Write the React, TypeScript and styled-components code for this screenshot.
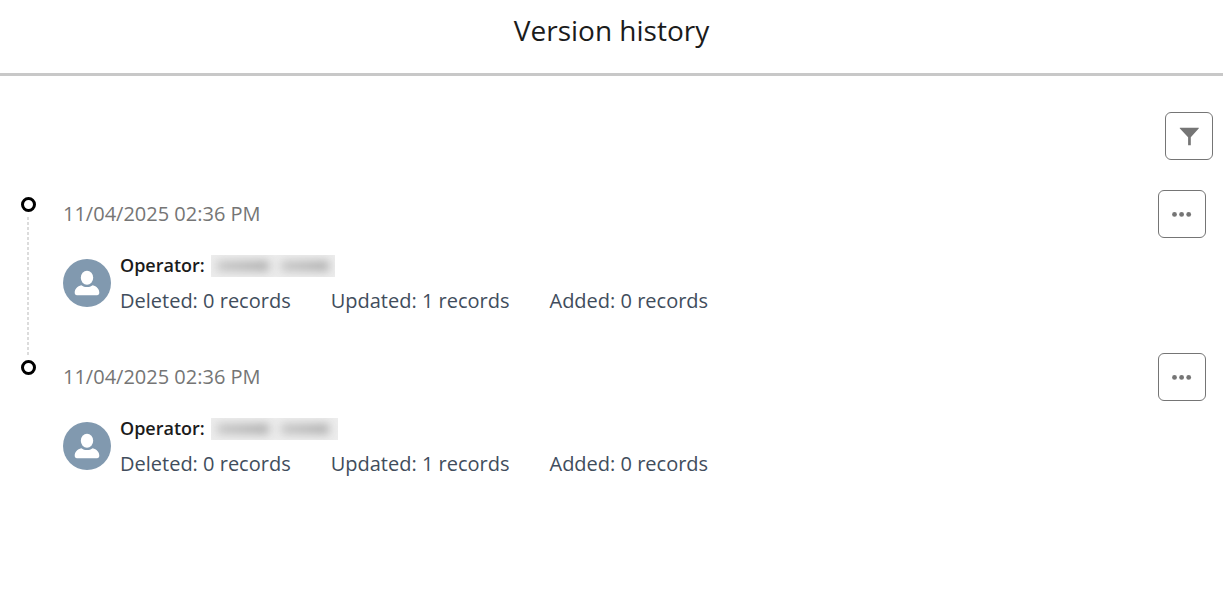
import React from "react";
import styled, { createGlobalStyle } from "styled-components";

const GlobalStyle = createGlobalStyle`
  *, *::before, *::after { box-sizing: border-box; }
  body {
    margin: 0;
    background: #fff;
    color: #1b1b1b;
    font-family: "Segoe UI", "Open Sans", "Noto Sans", sans-serif;
    font-size: 20px;
    line-height: 28px;
  }
`;

const Header = styled.header`
  padding: 10px 16px 23px;
  border-bottom: 3px solid #c8c8c8;
  text-align: center;
`;

const Title = styled.h1`
  margin: 0;
  font-size: 28px;
  font-weight: 400;
  line-height: 40px;
`;

const Toolbar = styled.div`
  display: flex;
  justify-content: flex-end;
  padding: 36px 10px 30px;
`;

const IconButton = styled.button`
  display: flex;
  flex: none;
  align-items: center;
  justify-content: center;
  width: 48px;
  height: 48px;
  padding: 0;
  border: 1px solid #757575;
  border-radius: 6px;
  background: #fff;
  color: #757575;
  cursor: pointer;
`;

const Timeline = styled.ol`
  margin: 0;
  padding: 0 17px 0 21px;
  list-style: none;
`;

const Entry = styled.li`
  display: flex;
`;

const Rail = styled.div`
  display: flex;
  flex: none;
  flex-direction: column;
  align-items: center;
  gap: 5px;
  width: 15px;
  margin-right: 27px;
  padding-top: 7px;
`;

const Marker = styled.span`
  flex: none;
  width: 15px;
  height: 15px;
  border: 3px solid #000;
  border-radius: 50%;
`;

const Connector = styled.span`
  flex: 1;
  width: 2px;
  margin: 0 1px -4px 0;
  background: repeating-linear-gradient(#dcdcdc 0 3px, transparent 3px 5px);
`;

const Details = styled.div`
  flex: 1;
  min-width: 0;
  padding-bottom: 38px;
`;

const DateRow = styled.div`
  display: flex;
  align-items: center;
  justify-content: space-between;
  height: 48px;
`;

const Timestamp = styled.time`
  color: #757575;
`;

const Change = styled.div`
  display: flex;
  gap: 9px;
  padding-top: 13px;
`;

const Avatar = styled.svg`
  flex: none;
  width: 48px;
  height: 48px;
  margin-top: 8px;
`;

const OperatorLine = styled.div`
  display: flex;
  align-items: center;
  gap: 6px;
  height: 28px;
  margin-bottom: 8px;
  font-size: 18px;
  font-weight: 600;
`;

const HiddenName = styled.span<{ $width: number }>`
  display: flex;
  align-items: center;
  gap: 12px;
  width: ${(p) => p.$width}px;
  height: 22px;
  margin-top: 2px;
  padding: 0 6px;
  overflow: hidden;
  background: #ededed;
`;

const NamePart = styled.span<{ $width: number }>`
  width: ${(p) => p.$width}px;
  height: 10px;
  background: linear-gradient(90deg, #c4c4c4, #ababab);
  filter: blur(5px);
`;

const Counts = styled.div`
  display: flex;
  flex-wrap: wrap;
  gap: 0 40px;
  color: #414d5c;
`;

const FilterIcon = () => (
  <svg width="20" height="20" viewBox="0 0 20 20" fill="currentColor" aria-hidden="true">
    <path d="M1.200 1.700h18.200c.5 0 .6.4.3.8l-7.900 8.800V19.300H9.100V11.300L.9 2.500C.6 2.100.7 1.700 1.200 1.700Z" />
  </svg>
);

const MoreIcon = () => (
  <svg width="20" height="6" viewBox="0 0 20 6" fill="currentColor" aria-hidden="true">
    <circle cx="2.500" cy="3.400" r="2.400" />
    <circle cx="9.600" cy="3.400" r="2.400" />
    <circle cx="16.700" cy="3.400" r="2.400" />
  </svg>
);

const PersonAvatar = () => (
  <Avatar viewBox="0 0 48 48" aria-hidden="true">
    <circle cx="24" cy="24" r="24" fill="#8199af" />
    <ellipse cx="24" cy="18.800" rx="6.200" ry="7" fill="#fff" />
    <path
      d="M18.300 26.200c1.700 1.300 3.600 1.900 5.700 1.900s4-.6 5.700-1.900c3.900.9 6.600 3.900 6.600 7.300 0 1.700-.8 2.700-2.300 2.700H14c-1.500 0-2.300-1-2.300-2.700 0-3.400 2.700-6.400 6.600-7.300Z"
      fill="#fff"
    />
  </Avatar>
);

interface Version {
  id: number;
  time: string;
  deleted: number;
  updated: number;
  added: number;
  nameWidth: number;
}

const versions: Version[] = [
  { id: 1, time: "11/04/2025 02:36 PM", deleted: 0, updated: 1, added: 0, nameWidth: 124 },
  { id: 2, time: "11/04/2025 02:36 PM", deleted: 0, updated: 1, added: 0, nameWidth: 127 },
];

export default function App() {
  return (
    <>
      <GlobalStyle />
      <Header>
        <Title>Version history</Title>
      </Header>
      <main>
        <Toolbar>
          <IconButton type="button" aria-label="Filter">
            <FilterIcon />
          </IconButton>
        </Toolbar>
        <Timeline>
          {versions.map((v, i) => (
            <Entry key={v.id}>
              <Rail>
                <Marker />
                {i < versions.length - 1 && <Connector />}
              </Rail>
              <Details>
                <DateRow>
                  <Timestamp>{v.time}</Timestamp>
                  <IconButton type="button" aria-label="More actions">
                    <MoreIcon />
                  </IconButton>
                </DateRow>
                <Change>
                  <PersonAvatar />
                  <div>
                    <OperatorLine>
                      <span>Operator:</span>
                      <HiddenName $width={v.nameWidth}>
                        <NamePart $width={52} />
                        <NamePart $width={48} />
                      </HiddenName>
                    </OperatorLine>
                    <Counts>
                      <span>Deleted: {v.deleted} records</span>
                      <span>Updated: {v.updated} records</span>
                      <span>Added: {v.added} records</span>
                    </Counts>
                  </div>
                </Change>
              </Details>
            </Entry>
          ))}
        </Timeline>
      </main>
    </>
  );
}
